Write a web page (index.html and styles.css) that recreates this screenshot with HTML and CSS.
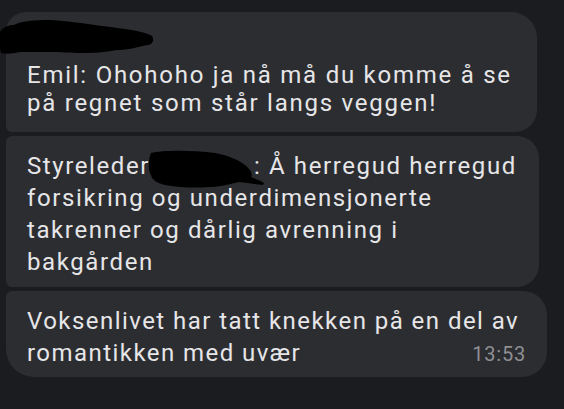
FILE: index.html
```html
<!DOCTYPE html>
<html lang="nb">
<head>
    <meta charset="UTF-8">
    <meta name="viewport" content="width=device-width, initial-scale=1.0">
    <title>Meldinger</title>
    <link rel="stylesheet" href="styles.css">
</head>
<body>
    <div class="thread">
        <div class="bubble bubble-first">
            <div class="sender">
                <svg class="scribble scribble-sender" viewBox="0 0 155 36" width="155" height="36">
                    <path d="M0,12 C4,6 10,5 14,5 C20,1 35,0 50,0 C70,1 95,5 117,8 C133,10 145,12 152,16 C155,20 152,25 147,25 C135,28 125,30 117,30 C100,33 90,33 83,33 C70,33 60,32 50,32 C35,32 25,32 20,32 C12,34 4,34 1,33 C-1,26 -1,18 0,12 Z" fill="#000"/>
                </svg>
            </div>
            <p class="text">Emil: Ohohoho ja nå må du komme å se<br>på regnet som står langs veggen!</p>
        </div>

        <div class="bubble bubble-middle">
            <p class="text">Styreleder<span class="hidden-name"><svg class="scribble scribble-name" viewBox="0 0 118 40" width="118" height="40"><path d="M4,3 C15,0 45,0 68,3 C80,5 92,10 98,15 C104,20 106,24 104,27 C108,29 114,31 117,33 L116,35 C108,34 100,33 92,32 C80,35 70,37 62,37 C50,38 35,38 18,35 C10,33 5,30 4,25 C1,20 1,10 4,3 Z" fill="#000"/></svg></span>: Å herregud herregud<br>forsikring og underdimensjonerte<br>takrenner og dårlig avrenning i<br>bakgården</p>
        </div>

        <div class="bubble bubble-last">
            <p class="text">Voksenlivet har tatt knekken på en del av</p>
            <div class="last-line">
                <span class="text">romantikken med uvær</span>
                <span class="time">13:53</span>
            </div>
        </div>
    </div>
</body>
</html>
```

FILE: styles.css
```css
body {
    margin: 0;
    background-color: #1b1c20;
    font-family: Roboto, "Noto Sans", sans-serif;
    color: #e6e6e8;
}

.thread {
    display: flex;
    flex-direction: column;
    align-items: flex-start;
    gap: 4px;
    padding: 12px 0 0 6px;
}

.bubble {
    position: relative;
    box-sizing: border-box;
    background-color: #2c2d31;
    padding: 14px 21px 9px;
}

.text {
    margin: 0;
    font-size: 24px;
    line-height: 32px;
    letter-spacing: 1.6px;
    white-space: nowrap;
}

.bubble-first {
    width: 531px;
    padding-top: 0;
    padding-bottom: 15px;
    border-radius: 20px 26px 22px 6px;
}

.bubble-first .text {
    line-height: 28px;
    letter-spacing: 1.75px;
}

.sender {
    height: 49px;
}

.bubble-middle {
    width: 533px;
    border-radius: 6px 22px 22px 6px;
}

.bubble-last {
    width: 541px;
    padding-bottom: 8px;
    border-radius: 6px 24px 25px 28px;
}

.bubble-last .text {
    letter-spacing: 1.45px;
}

.last-line {
    display: flex;
    align-items: baseline;
}

.time {
    margin-left: auto;
    font-size: 20px;
    letter-spacing: 0.8px;
    color: #8e8f93;
}

.hidden-name {
    position: relative;
    display: inline-block;
    width: 104px;
}

.scribble {
    position: absolute;
    display: block;
}

.scribble-sender {
    left: -6px;
    top: 8px;
}

.scribble-name {
    left: -3px;
    top: -24px;
}
```
